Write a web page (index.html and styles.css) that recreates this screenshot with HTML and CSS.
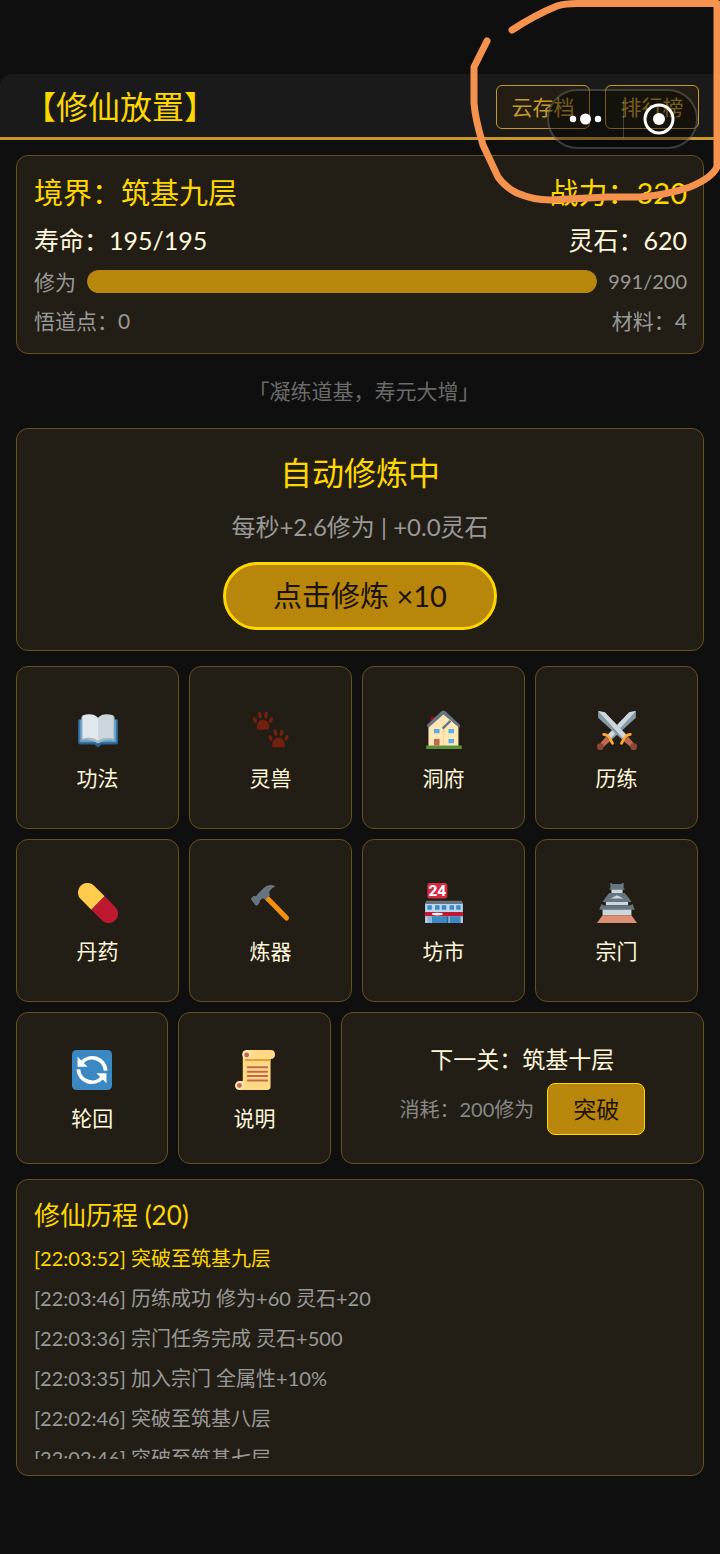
FILE: index.html
```html
<!DOCTYPE html>
<html lang="zh-CN">
<head>
<meta charset="utf-8">
<meta name="viewport" content="width=device-width, initial-scale=1">
<title>修仙放置</title>
<link rel="stylesheet" href="styles.css">
</head>
<body>
<header class="topbar">
  <h1 class="title">【修仙放置】</h1>
  <div class="top-actions">
    <button class="btn-outline" type="button">云存档</button>
    <button class="btn-outline" type="button">排行榜</button>
  </div>
</header>

<main class="page">
  <section class="card status">
    <div class="row realm"><span>境界：筑基九层</span><span>战力：320</span></div>
    <div class="row life"><span>寿命：195/195</span><span>灵石：620</span></div>
    <div class="row exp"><span>修为</span><div class="bar"><div class="bar-fill" style="width:100%"></div></div><span class="exp-value">991/200</span></div>
    <div class="row extra"><span>悟道点：0</span><span>材料：4</span></div>
  </section>

  <p class="quote">「凝练道基，寿元大增」</p>

  <section class="card train">
    <h2 class="train-title">自动修炼中</h2>
    <p class="rate">每秒+2.6修为 | +0.0灵石</p>
    <button class="btn-train" type="button">点击修炼 ×10</button>
  </section>

  <nav class="grid">
    <button class="card tile" type="button">
      <svg class="icon" viewBox="0 0 36 36" aria-hidden="true"><path fill="#2b6391" d="M2 8Q0 8 0 10v19q0 2 2 2h13q1 2 3 2t3-2h13q2 0 2-2V10q0-2-2-2z"/><path fill="#5c9cca" d="M1.500 9h33v20h-14L18 31l-2.500-2h-14z"/><path fill="#99aab5" d="M3 6Q13 3 18 8q5-5 15-2v22q-10-2-15 2Q13 26 3 28z"/><path fill="#e1e8ed" d="M4 5Q13 2 18 7v21Q13 24 4 26z"/><path fill="#ccd6dd" d="M32 5Q23 2 18 7v21q5-4 14-2z"/><path fill="#aab8c2" d="M18 28q-5-5-14-2 8 0 14 4 6-4 14-4-9-3-14 2z"/><path fill="#226699" d="M17 30h2v3h-2z"/></svg>
      <span>功法</span>
    </button>
    <button class="card tile" type="button">
      <svg class="icon" viewBox="0 0 36 36" fill="#74200f" aria-hidden="true"><g id="paw"><path d="M5.500 17.500q-1-5 2-7.500 3-2.500 6.500 0 3.500 3 2 7.500z"/><ellipse cx="3.500" cy="9" rx="1.500" ry="2.700" transform="rotate(-24 3.500 9)"/><ellipse cx="8" cy="4.500" rx="1.600" ry="3" transform="rotate(-10 8 4.500)"/><ellipse cx="13.500" cy="4.500" rx="1.600" ry="3" transform="rotate(10 13.500 4.500)"/><ellipse cx="18" cy="9" rx="1.500" ry="2.700" transform="rotate(24 18 9)"/></g><use href="#paw" x="14" y="16"/></svg>
      <span>灵兽</span>
    </button>
    <button class="card tile" type="button">
      <svg class="icon" viewBox="0 0 36 36" aria-hidden="true"><path fill="#a0041e" d="M6 6h4v10H6z"/><path fill="#ffe8b6" d="M4 15 17 3l14 12v19H4z"/><path fill="#ffd983" d="M17 12v22h1V12z"/><path fill="#66757f" d="M3 15Q2 14 3 13L16 1q1.500-1 3 0l13 12q1 1 0 3L17.500 4 4 16z"/><path fill="#66757f" d="m16 16 7-7 1.500 1.500-7 7z"/><path fill="#5c913b" d="M2 32h32v3H2z"/><path fill="#c1694f" d="M9 26h5v6H9z"/><path fill="#55acee" d="M9 17h5v4H9zm13 0h5v4h-5zm0 9h5v4h-5z"/></svg>
      <span>洞府</span>
    </button>
    <button class="card tile" type="button">
      <svg class="icon" viewBox="0 0 36 36" aria-hidden="true"><g id="sword"><path fill="#8899a6" d="M35 1 29 2 9 23l4 4L35 7z"/><path fill="#ccd6dd" d="M35 1 29 2 9 23l3 3z"/><path fill="#bf6952" d="m8 24 4 4-7 6-3-3z"/><path fill="none" stroke="#ffac33" stroke-width="2.400" stroke-linecap="round" d="M6 22q3 0 5 3t3 5"/><circle cx="3" cy="33" r="3" fill="#8a4633"/></g><use href="#sword" transform="matrix(-1 0 0 1 36 0)"/></svg>
      <span>历练</span>
    </button>
    <button class="card tile" type="button">
      <svg class="icon" viewBox="0 0 36 36" aria-hidden="true"><g transform="rotate(45 18 18)"><path fill="#ffcc4d" d="M18 9.500H4.500a8.500 8.500 0 0 0 0 17H18z"/><path fill="#be1931" d="M18 9.500h13.500a8.500 8.500 0 0 1 0 17H18z"/></g></svg>
      <span>丹药</span>
    </button>
    <button class="card tile" type="button">
      <svg class="icon" viewBox="0 0 36 36" aria-hidden="true"><path stroke="#f4900c" stroke-width="4.500" stroke-linecap="round" d="m14 13 18 18.500"/><path fill="#66757f" d="M22 3Q16 0 11 5L6 10q-1 2-2 2-2-1-3 1-2 1 0 3l3 4q2 1 3-1 1-1 1-3l2-2q2 0 3 1l4-4q-1-2 0-4 2-3 5-4z"/></svg>
      <span>炼器</span>
    </button>
    <button class="card tile" type="button">
      <svg class="icon" viewBox="0 0 36 36" aria-hidden="true"><path fill="#bdd7ec" d="M1 18h34v18H1z"/><path fill="#66757f" d="M2 16h32l1 3H1z"/><path fill="#3b88c3" d="M3 20h4v4H3zm7 0h4v4h-4zm6 0h4v4h-4zm7 0h4v4h-4zm6 0h4v4h-4z"/><path fill="#be1931" d="M1 26h34v4H1z"/><path fill="#3b88c3" d="M7 30h13v6H7zm16 0h10v6H23z"/><path fill="#8ab8dc" d="M3 30h4v6H3z"/><path fill="#226699" d="M20 30h2v6h-2z"/><ellipse cx="12" cy="28" rx="5" ry="1.200" fill="#fff"/><rect x="3" width="18" height="14" rx="2" fill="#d32b45"/><text x="12" y="11.500" text-anchor="middle" class="icon-text">24</text></svg>
      <span>坊市</span>
    </button>
    <button class="card tile" type="button">
      <svg class="icon" viewBox="0 0 36 36" aria-hidden="true"><path fill="#ccd6dd" d="M13 5h10v6H13zM8 14h20v6H8zm-3 8h26v7H5z"/><path fill="#66757f" d="M12 0h1l1 1h8l1-1h1v4l1 2H11l1-2zM11 9h14l4 5 2 3H5l2-3z"/><path fill="#66757f" d="M4 19q2 2 4 1h20q2 1 4-1l2 5H2z"/><path fill="#ccd6dd" d="m12 14 6-4 6 4z"/><path fill="#66757f" d="m12 14 6-3 6 3v-2l-6-3-6 3z"/><path fill="#dd8f73" d="M5 29h26l5 7H0z"/></svg>
      <span>宗门</span>
    </button>
  </nav>

  <div class="lower">
    <button class="card tile" type="button">
      <svg class="icon" viewBox="0 0 36 36" aria-hidden="true"><rect width="36" height="36" rx="4" fill="#3b88c3"/><path fill="none" stroke="#fff" stroke-width="3.400" d="M9 11A12.300 12.300 0 0 1 30.300 18.500M27 25A12.300 12.300 0 0 1 5.700 17.500"/><path fill="#fff" d="M5 6v9h9zM31 30v-9h-9z"/></svg>
      <span>轮回</span>
    </button>
    <button class="card tile" type="button">
      <svg class="icon" viewBox="0 0 36 36" aria-hidden="true"><path fill="#ffd983" d="M7 4h25v29q0 3-4 3H4v-8h3z"/><path fill="#e39f3d" d="M9 8h23v2H9z"/><path fill="#ffd983" d="M10 0h22q4 0 4 4t-4 4H10z"/><circle cx="10.500" cy="4" r="4" fill="#ffe8b6"/><circle cx="10.500" cy="4.500" r="2.200" fill="#c1694f"/><circle cx="4" cy="32" r="4" fill="#ffe8b6"/><circle cx="4" cy="32" r="2.200" fill="#c1694f"/><path stroke="#c1694f" stroke-width="1.800" stroke-linecap="round" d="M11.500 15.500h17.500m-17.500 4h17.500m-17.500 4h17.500m-17.500 4h17.500"/></svg>
      <span>说明</span>
    </button>
    <section class="card next">
      <h2 class="next-title">下一关：筑基十层</h2>
      <div class="next-row"><span>消耗：200修为</span><button class="btn-break" type="button">突破</button></div>
    </section>
  </div>

  <section class="card log">
    <h2 class="log-title">修仙历程 (20)</h2>
    <ul class="log-list">
      <li class="fresh">[22:03:52] 突破至筑基九层</li>
      <li>[22:03:46] 历练成功 修为+60 灵石+20</li>
      <li>[22:03:36] 宗门任务完成 灵石+500</li>
      <li>[22:03:35] 加入宗门 全属性+10%</li>
      <li>[22:02:46] 突破至筑基八层</li>
      <li>[22:02:46] 突破至筑基七层</li>
    </ul>
  </section>
</main>

<div class="capsule">
  <button class="capsule-btn" type="button" aria-label="更多"><svg width="34" height="12" viewBox="0 0 34 12"><g fill="#fff"><circle cx="4" cy="6" r="3.200"/><circle cx="16.500" cy="6" r="5.500"/><circle cx="29" cy="6" r="3.200"/></g></svg></button>
  <button class="capsule-btn" type="button" aria-label="关闭"><svg width="32" height="32" viewBox="0 0 32 32"><circle cx="16" cy="16" r="14" fill="none" stroke="#fff" stroke-width="3"/><circle cx="16" cy="16" r="6" fill="#fff"/></svg></button>
</div>
<svg class="mark" width="260" height="220" viewBox="460 0 260 220" aria-hidden="true"><path d="M512 30Q535 15 557 6q8-2.500 20-2.500H717V167Q712 178 690 187 667 195 640 197H607L550 200Q533 200 517 193 505 187 498 177L483 145Q475 118 474 103V67L487 41"/></svg>
</body>
</html>
```
FILE: styles.css
```css
* { box-sizing: border-box; }
body {
  margin: 0;
  min-height: 100vh;
  padding-top: 74px;
  position: relative;
  background: #0f0f0f;
  color: #fff8dc;
  font-family: Lato, "Noto Sans CJK SC", sans-serif;
  font-weight: 400;
}
h1, h2, p, ul { margin: 0; padding: 0; font-weight: 400; }
button { font: inherit; color: inherit; margin: 0; padding: 0; cursor: pointer; }

.topbar {
  display: flex;
  align-items: center;
  justify-content: space-between;
  height: 66px;
  padding: 2px 21px 0 24px;
  background: #1a1a1a;
  border-bottom: 3px solid #c8962b;
  border-radius: 12px 0 0 0;
}
.title { font-size: 32px; line-height: 48px; color: #ffd700; }
.top-actions { display: flex; gap: 15px; }
.btn-outline {
  width: 94px;
  height: 44px;
  border: 1px solid #c39a2c;
  border-radius: 6px;
  background: #231d13;
  color: #c39a2c;
  font-size: 21px;
  line-height: 32px;
}

.page { padding: 15px 16px 76px; }
.card {
  border: 1px solid #65511c;
  border-radius: 12px;
  background: #231e15;
}

.status { display: flex; flex-direction: column; gap: 8px; padding: 16px 16px 17px; }
.row { display: flex; align-items: center; justify-content: space-between; padding-left: 1px; }
.realm { font-size: 29px; line-height: 42px; color: #ffd700; }
.life { font-size: 25px; line-height: 36px; }
.exp, .extra { font-size: 21px; line-height: 31px; color: #999; }
.exp { gap: 11px; }
.exp-value { font-size: 20px; }
.bar { flex: 1; height: 23px; border-radius: 12px; background: #3a3020; overflow: hidden; }
.bar-fill { height: 100%; border-radius: 12px; background: #b8860b; }

.quote { padding-left: 8px; font-size: 21px; line-height: 74px; text-align: center; color: #6b6b6b; }

.train { display: flex; flex-direction: column; align-items: center; padding: 20px 16px; }
.train-title { font-size: 32px; line-height: 48px; color: #ffd700; }
.rate { margin: 12px 0 17px; font-size: 24px; line-height: 36px; color: #999; }
.btn-train {
  width: 42%;
  height: 68px;
  border: 3px solid #ffd700;
  border-radius: 34px;
  background: #b8860b;
  color: #1a1208;
  font-size: 29px;
  line-height: 40px;
}

.grid { display: flex; flex-wrap: wrap; gap: 10px; margin-top: 15px; }
.tile {
  display: flex;
  flex-direction: column;
  align-items: center;
  justify-content: center;
  gap: 12px;
  padding-top: 8px;
  aspect-ratio: 1;
  font-size: 21px;
  line-height: 32px;
}
.grid .tile { width: calc(25% - 9px); }
.icon { display: block; width: 40px; height: 40px; }
.icon-text { font: 700 14px Roboto, sans-serif; fill: #fff; }

.lower { display: flex; gap: 10px; margin-top: 10px; }
.lower .tile { width: calc(22% + 1px); }
.next { flex: 1; display: flex; flex-direction: column; align-items: center; justify-content: center; gap: 4px; padding-bottom: 2px; }
.next-title { font-size: 23px; line-height: 40px; }
.next-row { display: flex; align-items: center; gap: 13px; font-size: 20px; line-height: 32px; color: #888; }
.btn-break {
  width: 98px;
  height: 52px;
  border: 1px solid #ffd700;
  border-radius: 8px;
  background: #b8860b;
  color: #1a1208;
  font-size: 23px;
}

.log { margin-top: 15px; padding: 16px 17px; }
.log-title { font-size: 26px; line-height: 38px; margin-bottom: 4px; color: #ffd700; }
.log-list { list-style: none; height: 221px; overflow: hidden; font-size: 20px; line-height: 40px; color: #999; }
.fresh { color: #ffd700; }

.capsule {
  position: absolute;
  top: 89px;
  right: 22px;
  display: flex;
  width: 151px;
  height: 60px;
  border: 2px solid rgba(255, 255, 255, .2);
  border-radius: 30px;
  background: rgba(0, 0, 0, .4);
}
.capsule-btn { flex: 1; display: grid; place-items: center; border: 0; background: none; }
.capsule-btn + .capsule-btn { position: relative; }
.capsule-btn + .capsule-btn::before {
  content: "";
  position: absolute;
  left: 0;
  top: 9px;
  bottom: 9px;
  border-left: 1px solid rgba(255, 255, 255, .2);
}
.mark {
  position: absolute;
  top: 0;
  right: 0;
  fill: none;
  stroke: #f5924e;
  stroke-width: 7px;
  stroke-linecap: round;
  stroke-linejoin: round;
  pointer-events: none;
}
```
